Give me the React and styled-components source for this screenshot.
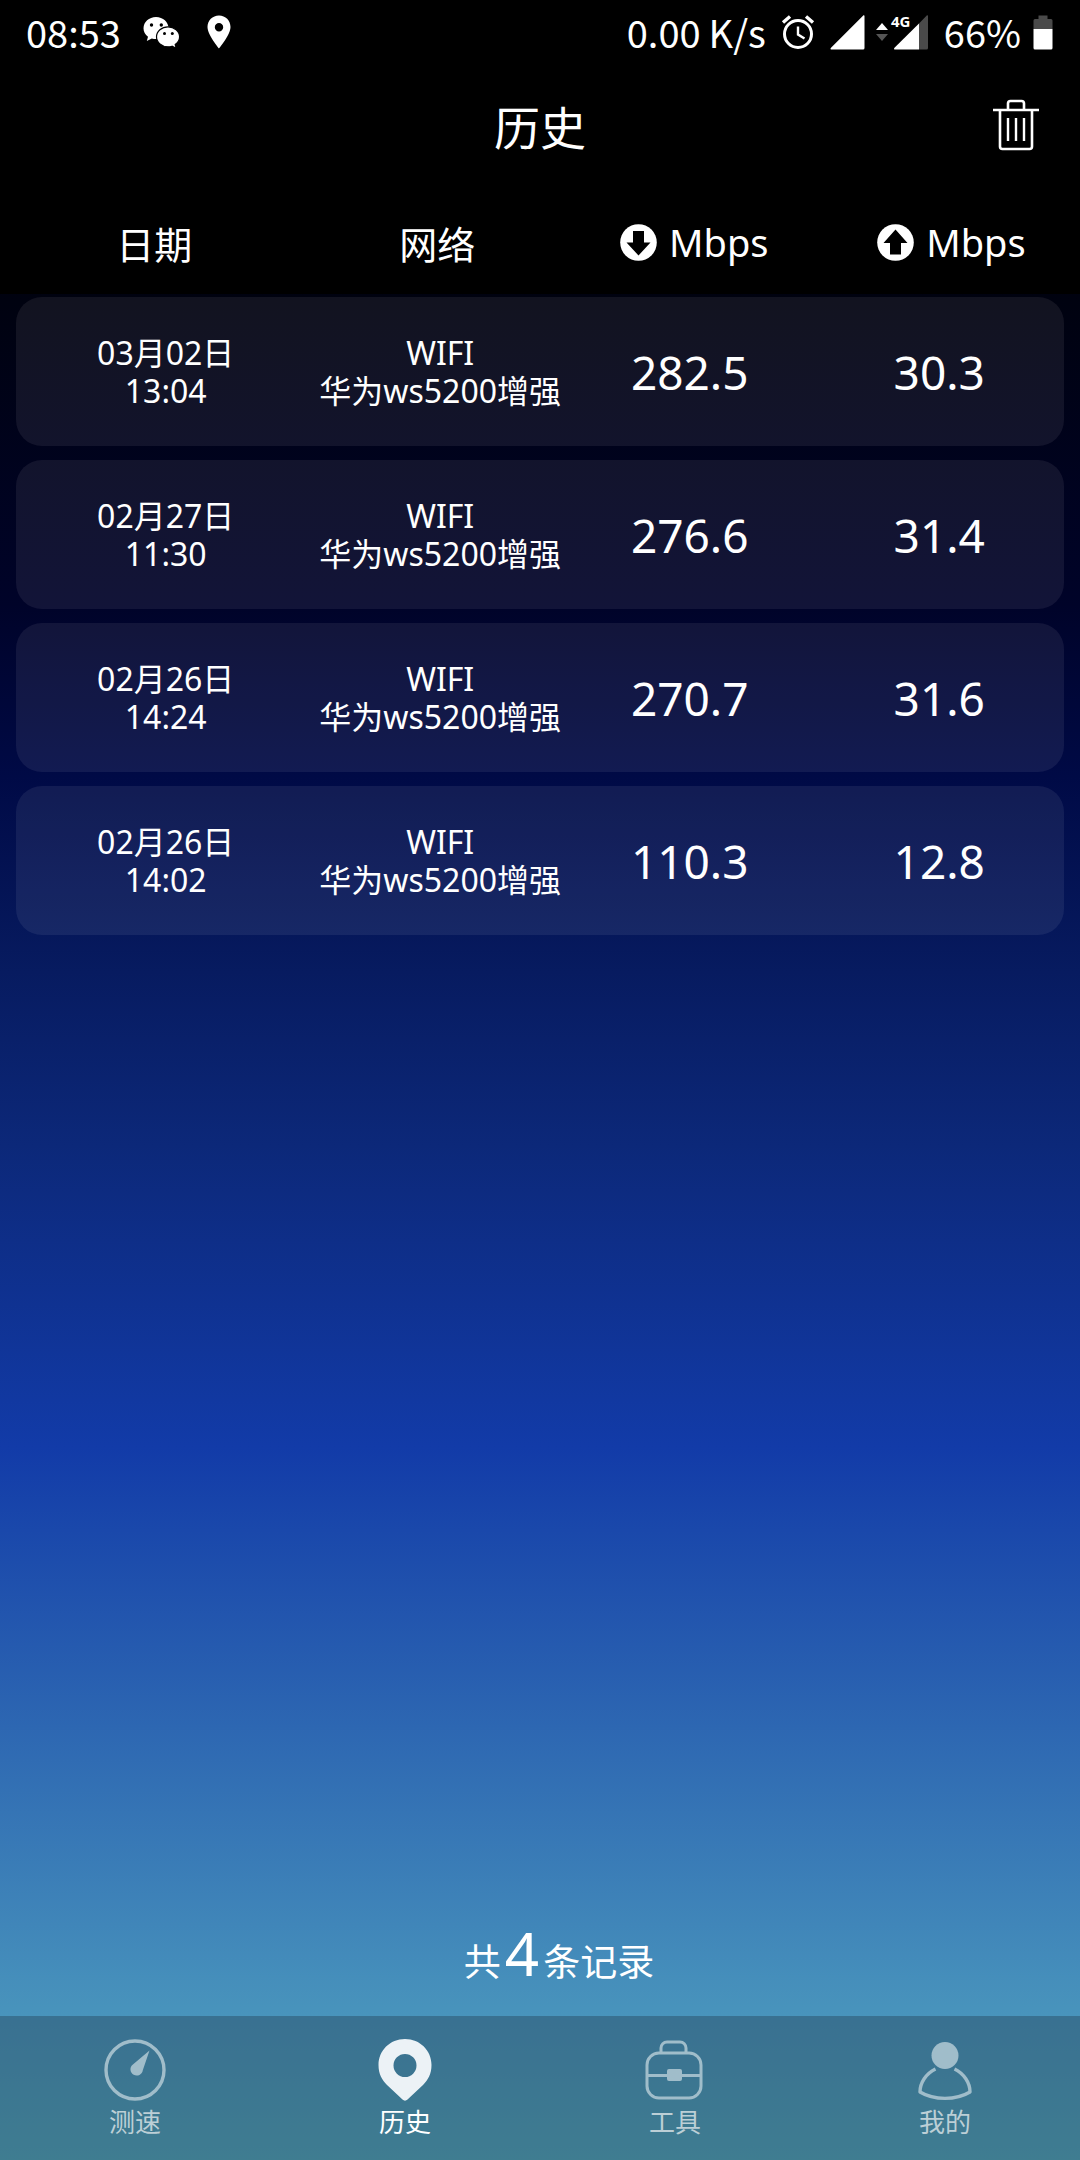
import React from "react";
import styled, { createGlobalStyle } from "styled-components";

const records = [
  { id: 1, date: "03月02日", time: "13:04", type: "WIFI", ssid: "华为ws5200增强", down: "282.5", up: "30.3" },
  { id: 2, date: "02月27日", time: "11:30", type: "WIFI", ssid: "华为ws5200增强", down: "276.6", up: "31.4" },
  { id: 3, date: "02月26日", time: "14:24", type: "WIFI", ssid: "华为ws5200增强", down: "270.7", up: "31.6" },
  { id: 4, date: "02月26日", time: "14:02", type: "WIFI", ssid: "华为ws5200增强", down: "110.3", up: "12.8" },
];

const WechatIcon = () => (
  <svg width="38" height="32" viewBox="0 0 38 32">
    <path
      fill="#fff"
      d="M13 1C6 1 .5 6 .5 12.200c0 3.500 1.700 6.500 4.500 8.600L3.800 25l5-2.500c1.400.4 2.800.5 4.200.5 7 0 12.500-4.700 12.500-10.800S20 1 13 1z"
    />
    <path
      fill="#fff"
      stroke="#000"
      strokeWidth="1.200"
      d="M25 10.800c-6.300 0-11.500 4.400-11.500 10s5.200 10 11.500 10c1.400 0 2.700-.2 4-.6l4.200 2-1-3.600c2.700-1.900 4.400-4.600 4.400-7.800 0-5.600-5.300-10-11.600-10z"
    />
    <circle cx="8.500" cy="9" r="1.700" />
    <circle cx="18.300" cy="9" r="1.700" />
    <circle cx="21.500" cy="17.500" r="1.500" />
    <circle cx="29.300" cy="17.500" r="1.500" />
  </svg>
);

const PlaceIcon = () => (
  <svg width="24" height="34" viewBox="0 0 24 34">
    <path
      fill="#fff"
      fillRule="evenodd"
      d="M12 .5C5.500.5.500 5.600.5 12c0 8 11.500 21.500 11.500 21.500S23.500 20 23.500 12C23.500 5.600 18.500.5 12 .5zM12 8a4.200 4.200 0 1 1 0 8.400A4.200 4.200 0 0 1 12 8z"
    />
  </svg>
);

const AlarmIcon = () => (
  <svg width="34" height="36" viewBox="0 0 34 36" fill="none" stroke="#fff">
    <circle cx="17" cy="20" r="13.500" strokeWidth="3" />
    <path d="M17 12.500V20.500l6.500 4" strokeWidth="2.400" />
    <path d="M2 8.500l7-6M32 8.500l-7-6" strokeWidth="3.400" />
  </svg>
);

const SignalIcon = () => (
  <svg width="35" height="35" viewBox="0 0 35 35">
    <path fill="#fff" d="M34.500 1v32a1.500 1.500 0 0 1-1.500 1.500H1.500c-1 0-1.300-1-.5-1.800L33 .700c.8-.7 1.500-.4 1.500.3z" />
  </svg>
);

const MobileSignalIcon = () => (
  <svg width="54" height="35" viewBox="0 0 54 35" overflow="visible">
    <path fill="#fff" d="M7 8l6 7H1z" />
    <path fill="#555" d="M7 26l6-7H1z" />
    <path fill="#4a4a4a" d="M44 8.500L51.500.700c.8-.7 1.500-.4 1.500.3v32a1.500 1.500 0 0 1-1.500 1.500H44z" />
    <path fill="#fff" d="M44 8.500v26H20c-1 0-1.300-1-.5-1.800z" />
    <text
      x="16"
      y="12"
      fill="#fff"
      stroke="#000"
      strokeWidth="3"
      paintOrder="stroke"
      fontFamily="Noto Sans"
      fontSize="15"
      fontWeight="700"
    >
      4G
    </text>
  </svg>
);

const BatteryIcon = () => (
  <svg width="20" height="35" viewBox="0 0 20 35">
    <path fill="#4a4a4a" d="M5.500.500h9V4H18a1.500 1.500 0 0 1 1.500 1.500V14H.5V5.500A1.500 1.500 0 0 1 2 4h3.500z" />
    <path fill="#fff" d="M.5 14h19v19a1.500 1.500 0 0 1-1.500 1.500H2A1.500 1.500 0 0 1 .5 33z" />
  </svg>
);

const TrashIcon = () => (
  <svg width="48" height="52" viewBox="0 0 48 52" fill="none" stroke="#fff">
    <path strokeWidth="2.600" d="M1 11h46M16 10V4.500A2.500 2.500 0 0 1 18.500 2h11A2.500 2.500 0 0 1 32 4.500V10" />
    <path strokeWidth="2.600" d="M8 11v36.500A2.500 2.500 0 0 0 10.500 50h27a2.500 2.500 0 0 0 2.500-2.500V11" />
    <path strokeWidth="2.400" d="M16 19v23M24 19v23M32 19v23" />
  </svg>
);

const ArrowIcon = ({ up }) => (
  <svg width="37" height="37" viewBox="0 0 37 37">
    <circle cx="18.500" cy="18.500" r="18.300" fill="#fff" />
    <path
      d={
        up
          ? "M18.500 5.500L30.500 19H24v11.500H13V19H6.500z"
          : "M18.500 31.500L6.500 18.500H13V7h11v11.500h6.500z"
      }
    />
  </svg>
);

const GaugeIcon = () => (
  <svg width="62" height="62" viewBox="0 0 62 62">
    <circle cx="31" cy="31" r="29" fill="none" stroke="currentColor" strokeWidth="3.400" />
    <path fill="currentColor" d="M45.500 11.500L38.800 31.200a6.200 6.200 0 1 1-10.200-5.500z" />
  </svg>
);

const PinIcon = () => (
  <svg width="62" height="62" viewBox="0 0 62 62">
    <path
      fill="currentColor"
      fillRule="evenodd"
      d="M31 0C16 0 4.500 11.500 4.500 26c0 9 3.500 15 8.500 20l15.500 14.500c1.600 1.500 3.400 1.500 5 0L49 46c5-5 8.500-11 8.500-20C57.500 11.500 46 0 31 0zM31 15a11.500 11.500 0 1 1 0 23 11.500 11.500 0 0 1 0-23z"
    />
  </svg>
);

const ToolboxIcon = () => (
  <svg width="62" height="62" viewBox="0 0 62 62" fill="none" stroke="currentColor" strokeWidth="3">
    <rect x="3" y="14" width="54" height="45" rx="12" />
    <path d="M17 14V9a6 6 0 0 1 6-6h13a6 6 0 0 1 6 6v5M3 36.500h54" />
    <rect x="23" y="30" width="15" height="12" rx="2" fill="currentColor" stroke="none" />
  </svg>
);

const UserIcon = () => (
  <svg width="62" height="62" viewBox="0 0 62 62">
    <circle cx="31" cy="16.500" r="13.500" fill="currentColor" />
    <path
      fill="none"
      stroke="currentColor"
      strokeWidth="3.400"
      strokeLinejoin="round"
      d="M21.500 30C12 34.500 6 44 6 53c14 8.500 36 8.500 50 0 0-9-6-18.500-15.500-23"
    />
  </svg>
);

const tabs = [
  { name: "测速", Icon: GaugeIcon },
  { name: "历史", Icon: PinIcon, active: true },
  { name: "工具", Icon: ToolboxIcon },
  { name: "我的", Icon: UserIcon },
];

const App = () => {
  return (
    <>
      <GlobalStyle />
      <Page>
        <Top>
          <StatusBar>
            <StatusGroup $gap={22}>
              <span>08:53</span>
              <Notices>
                <WechatIcon />
                <PlaceIcon />
              </Notices>
            </StatusGroup>
            <StatusGroup $gap={15}>
              <Speed>
                <span>0.00</span>
                <span>K/s</span>
              </Speed>
              <AlarmIcon />
              <Signals>
                <SignalIcon />
                <MobileSignalIcon />
              </Signals>
              <Battery>
                <span>66%</span>
                <BatteryIcon />
              </Battery>
            </StatusGroup>
          </StatusBar>
          <TitleBar>
            <Title>历史</Title>
            <DeleteBtn type="button" aria-label="清空">
              <TrashIcon />
            </DeleteBtn>
          </TitleBar>
        </Top>

        <Table>
          <Head>
            <HeadRow>
              <HeadCell scope="col">日期</HeadCell>
              <HeadCell scope="col">网络</HeadCell>
              <HeadCell scope="col" aria-label="下载 Mbps">
                <ArrowIcon />
                Mbps
              </HeadCell>
              <HeadCell scope="col" aria-label="上传 Mbps">
                <ArrowIcon up />
                Mbps
              </HeadCell>
            </HeadRow>
          </Head>
          <Body>
            {records.map((item) => (
              <Row key={item.id}>
                <Cell>
                  <Line>{item.date}</Line>
                  <Line>{item.time}</Line>
                </Cell>
                <Cell>
                  <Line>{item.type}</Line>
                  <Line>{item.ssid}</Line>
                </Cell>
                <SpeedCell>{item.down}</SpeedCell>
                <SpeedCell>{item.up}</SpeedCell>
              </Row>
            ))}
          </Body>
        </Table>

        <Summary>
          共<Count>{records.length}</Count>条记录
        </Summary>

        <TabBar>
          {tabs.map(({ name, Icon, active }) => (
            <Tab key={name} href="#" $active={active}>
              <Icon />
              <span>{name}</span>
            </Tab>
          ))}
        </TabBar>
      </Page>
    </>
  );
};

export default App;

const columns = "6fr 5fr 5fr 5fr";

const GlobalStyle = createGlobalStyle`
  * {
    box-sizing: border-box;
  }

  body {
    margin: 0;
    background: #000000;
    color: #ffffff;
    font-family: "Noto Sans", "Noto Sans CJK SC", sans-serif;
  }

  svg {
    display: block;
    flex-shrink: 0;
  }
`;

const Page = styled.div`
  display: flex;
  flex-direction: column;
  min-height: 100vh;
  background: linear-gradient(
    #000000 0%,
    #000210 14%,
    #000329 28%,
    #000a46 36%,
    #071b60 45%,
    #0c2879 53%,
    #123ba8 67%,
    #4893bc 93%,
    #52a8bc 100%
  );
`;

const Top = styled.header`
  background: #000000;
`;

const StatusBar = styled.div`
  display: flex;
  align-items: center;
  justify-content: space-between;
  height: 64px;
  padding: 0 27px 0 26px;
  font-family: "Noto Sans CJK SC", sans-serif;
  font-size: 38px;
  line-height: 62px;
`;

const StatusGroup = styled.div`
  display: flex;
  align-items: center;
  gap: ${({ $gap }) => $gap}px;
`;

const Notices = styled.div`
  display: flex;
  align-items: center;
  gap: 26px;
`;

const Speed = styled.div`
  display: flex;
  gap: 8px;
`;

const Signals = styled.div`
  display: flex;
  gap: 10px;
`;

const Battery = styled.div`
  display: flex;
  align-items: center;
  gap: 12px;
`;

const TitleBar = styled.div`
  display: grid;
  grid-template-columns: 1fr auto 1fr;
  align-items: center;
  height: 122px;
  padding: 0 40px;
`;

const Title = styled.h1`
  grid-column: 2;
  margin: 0;
  font-size: 46px;
  font-weight: 400;
`;

const DeleteBtn = styled.button`
  all: unset;
  justify-self: end;
  cursor: pointer;
`;

const Table = styled.table`
  display: block;
`;

const Head = styled.thead`
  display: block;
  background: #000000;
`;

const HeadRow = styled.tr`
  display: grid;
  grid-template-columns: ${columns};
  height: 108px;
  padding-top: 4px;
`;

const HeadCell = styled.th`
  display: flex;
  align-items: center;
  justify-content: center;
  gap: 12px;
  padding: 0;
  font-size: 38px;
  font-weight: 400;
`;

const Body = styled.tbody`
  display: flex;
  flex-direction: column;
  gap: 14px;
  padding: 3px 16px;
`;

const Row = styled.tr`
  display: grid;
  grid-template-columns: ${columns};
  align-items: center;
  height: 149px;
  border-radius: 26px;
  background: rgba(255, 255, 255, 0.07);
`;

const Cell = styled.td`
  padding: 0;
  font-size: 32px;
  line-height: 38px;
  text-align: center;
  white-space: nowrap;
`;

const Line = styled.div`
  height: 38px;
`;

const SpeedCell = styled(Cell)`
  font-size: 46px;
`;

const Summary = styled.p`
  display: flex;
  align-items: baseline;
  justify-content: center;
  margin: auto 0 0;
  padding: 0 0 22px 38px;
  font-size: 37px;
`;

const Count = styled.span`
  padding: 0 4px;
  font-size: 60px;
`;

const TabBar = styled.nav`
  display: grid;
  grid-template-columns: repeat(4, 1fr);
  height: 144px;
  background: rgba(36, 60, 80, 0.4);
`;

const Tab = styled.a`
  display: flex;
  flex-direction: column;
  align-items: center;
  padding-top: 23px;
  color: ${({ $active }) => ($active ? "#ecf2f6" : "#a0bdca")};
  font-size: 26px;
  line-height: 42px;
  text-decoration: none;

  span {
    color: ${({ $active }) => ($active ? "#ffffff" : "#bccfd6")};
  }
`;
